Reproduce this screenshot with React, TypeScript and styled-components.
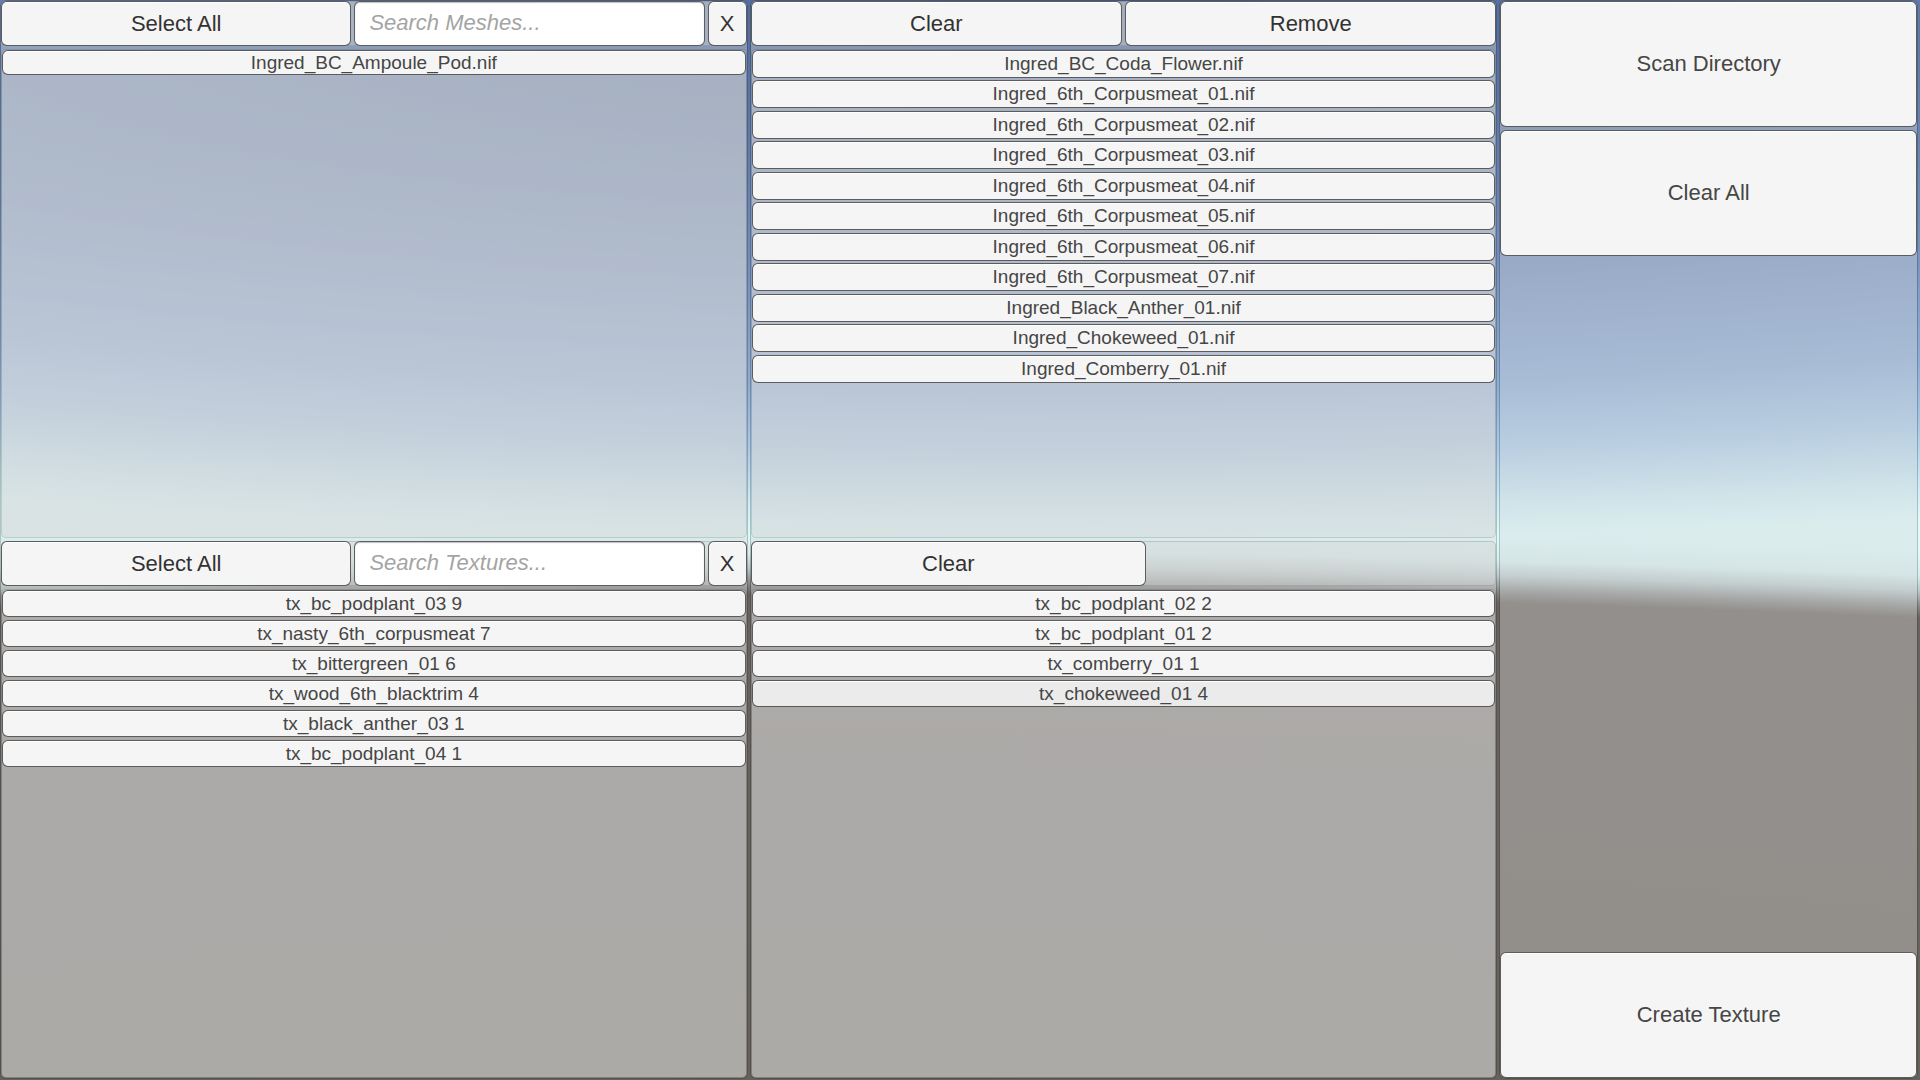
import React from "react";
import styled, { createGlobalStyle, css } from "styled-components";

const GlobalStyle = createGlobalStyle`
  *, *::before, *::after { box-sizing: border-box; }
  body {
    margin: 0;
    font-family: "Liberation Sans", Arial, Helvetica, sans-serif;
    background: #68625c;
  }
`;

const tint = "rgba(214, 214, 214, 0.39)";

/* Skybox: the ground fades in at the horizon, over a curved sky gradient. */
const Page = styled.main`
  display: grid;
  grid-template-columns: 1.79fr 1.79fr 1fr;
  column-gap: 4px;
  height: 100vh;
  min-height: 640px;
  padding: 1px 3px 2px 1px;
  background:
    radial-gradient(
      400% 100% at 44% 100%,
      rgb(103, 97, 90) 0%,
      rgb(105, 99, 95) 45%,
      rgba(118, 116, 114, 0.85) 46%,
      rgba(145, 150, 150, 0.5) 47.4%,
      rgba(180, 190, 190, 0.2) 48.8%,
      rgba(200, 215, 215, 0) 51%
    ),
    radial-gradient(
      310% 100% at 57% 0%,
      rgb(78, 102, 152) 0%,
      rgb(92, 119, 165) 12%,
      rgb(114, 142, 188) 25%,
      rgb(140, 172, 214) 36%,
      rgb(168, 202, 232) 42%,
      rgb(204, 236, 246) 47%,
      rgb(222, 251, 252) 50%,
      rgb(228, 250, 248) 100%
    );
`;

const panel = css`
  background: ${tint};
  border-radius: 5px;
`;

const Column = styled.section`
  ${panel}
  display: grid;
  grid-template-rows: 45px minmax(0, 1fr) 45px minmax(0, 1fr);
  row-gap: 3px;
  min-width: 0;
  box-shadow: 0 0 0 1px rgba(30, 30, 30, 0.25);
`;

const SideColumn = styled.aside`
  ${panel}
  display: flex;
  flex-direction: column;
  gap: 3px;
  min-width: 0;
  box-shadow: 0 0 0 1px rgba(30, 30, 30, 0.25);
`;

const Toolbar = styled.div<{ $columns: string }>`
  ${panel}
  display: grid;
  grid-template-columns: ${(p) => p.$columns};
  column-gap: 3px;
  box-shadow: inset 0 0 0 1px rgba(60, 80, 80, 0.2);
`;

const Button = styled.button`
  min-width: 0;
  padding: 0;
  border: 1px solid rgba(40, 40, 40, 0.75);
  border-radius: 6px;
  background: #f5f5f5;
  box-shadow: inset 0 1px 0 #ffffff;
  color: #323232;
  font: 22px/24px "Liberation Sans", Arial, sans-serif;
  text-align: center;
  cursor: pointer;
`;

const SideButton = styled(Button)`
  height: 126px;
  color: #464646;

  &:last-child {
    margin-top: auto;
  }
`;

const SearchField = styled.input`
  min-width: 0;
  width: 100%;
  padding: 0 14px 2px;
  border: 1px solid rgba(40, 40, 40, 0.75);
  border-radius: 6px;
  background: #ffffff;
  box-shadow: inset 0 1px 1px rgba(0, 0, 0, 0.25);
  color: #323232;
  font: 22px/24px "Liberation Sans", Arial, sans-serif;
  outline: none;

  &::placeholder {
    color: #a4a4a4;
    font-style: italic;
    opacity: 1;
  }
`;

const List = styled.ul<{ $loose?: boolean }>`
  ${panel}
  display: flex;
  flex-direction: column;
  gap: ${(p) => (p.$loose ? 2 : 3)}px;
  margin: 0;
  padding: 0;
  border: 1px solid rgba(60, 80, 80, 0.2);
  background-clip: padding-box;
  list-style: none;
  overflow: hidden auto;

  li:nth-child(even) {
    margin-bottom: ${(p) => (p.$loose ? 1 : 0)}px;
  }
`;

const Item = styled.li`
  display: flex;
`;

const ItemButton = styled(Button)<{ $height: number; $hot?: boolean }>`
  flex: 1;
  height: ${(p) => p.$height}px;
  background: ${(p) => (p.$hot ? "#ebebeb" : "#f5f5f5")};
  color: #464646;
  font-size: 19px;
  line-height: 22px;
`;

interface FileListProps {
  label: string;
  names: string[];
  height: number;
  loose?: boolean;
  hot?: string;
}

function FileList({ label, names, height, loose, hot }: FileListProps) {
  return (
    <List aria-label={label} $loose={loose}>
      {names.map((name) => (
        <Item key={name}>
          <ItemButton type="button" $height={height} $hot={name === hot}>
            {name}
          </ItemButton>
        </Item>
      ))}
    </List>
  );
}

function SearchBar({ kind }: { kind: string }) {
  return (
    <Toolbar $columns="9fr 9fr 1fr">
      <Button type="button">Select All</Button>
      <SearchField
        type="text"
        aria-label={`Search ${kind}`}
        placeholder={`Search ${kind}...`}
      />
      <Button type="button">X</Button>
    </Toolbar>
  );
}

const meshes = ["Ingred_BC_Ampoule_Pod.nif"];

const selectedMeshes = [
  "Ingred_BC_Coda_Flower.nif",
  "Ingred_6th_Corpusmeat_01.nif",
  "Ingred_6th_Corpusmeat_02.nif",
  "Ingred_6th_Corpusmeat_03.nif",
  "Ingred_6th_Corpusmeat_04.nif",
  "Ingred_6th_Corpusmeat_05.nif",
  "Ingred_6th_Corpusmeat_06.nif",
  "Ingred_6th_Corpusmeat_07.nif",
  "Ingred_Black_Anther_01.nif",
  "Ingred_Chokeweed_01.nif",
  "Ingred_Comberry_01.nif",
];

const textures = [
  "tx_bc_podplant_03 9",
  "tx_nasty_6th_corpusmeat 7",
  "tx_bittergreen_01 6",
  "tx_wood_6th_blacktrim 4",
  "tx_black_anther_03 1",
  "tx_bc_podplant_04 1",
];

const selectedTextures = [
  "tx_bc_podplant_02 2",
  "tx_bc_podplant_01 2",
  "tx_comberry_01 1",
  "tx_chokeweed_01 4",
];

export default function App() {
  return (
    <>
      <GlobalStyle />
      <Page>
        <Column>
          <SearchBar kind="Meshes" />
          <FileList label="Meshes" names={meshes} height={25} />
          <SearchBar kind="Textures" />
          <FileList label="Textures" names={textures} height={27} />
        </Column>
        <Column>
          <Toolbar $columns="1fr 1fr">
            <Button type="button">Clear</Button>
            <Button type="button">Remove</Button>
          </Toolbar>
          <FileList label="Selected meshes" names={selectedMeshes} height={28} loose />
          <Toolbar $columns="53%">
            <Button type="button">Clear</Button>
          </Toolbar>
          <FileList
            label="Selected textures"
            names={selectedTextures}
            height={27}
            hot="tx_chokeweed_01 4"
          />
        </Column>
        <SideColumn>
          <SideButton type="button">Scan Directory</SideButton>
          <SideButton type="button">Clear All</SideButton>
          <SideButton type="button">Create Texture</SideButton>
        </SideColumn>
      </Page>
    </>
  );
}
